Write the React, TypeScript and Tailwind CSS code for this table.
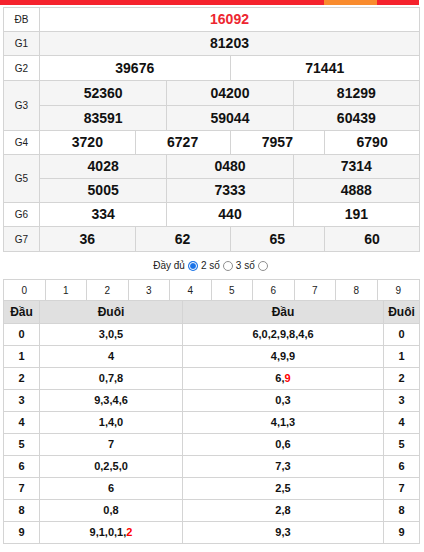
const prizes = [
  { label: "ĐB", h: "h-[24px]", cols: 1, lines: [["16092"]], red: true, gray: false },
  { label: "G1", h: "h-[24px]", cols: 1, lines: [["81203"]], gray: true },
  { label: "G2", h: "h-[25px]", cols: 2, lines: [["39676", "71441"]], gray: false },
  { label: "G3", h: "h-[50px]", cols: 3, lines: [["52360", "04200", "81299"], ["83591", "59044", "60439"]], gray: true },
  { label: "G4", h: "h-[24px]", cols: 4, lines: [["3720", "6727", "7957", "6790"]], gray: false },
  { label: "G5", h: "h-[48px]", cols: 3, lines: [["4028", "0480", "7314"], ["5005", "7333", "4888"]], gray: true },
  { label: "G6", h: "h-[24px]", cols: 3, lines: [["334", "440", "191"]], gray: false },
  { label: "G7", h: "h-[25px]", cols: 4, lines: [["36", "62", "65", "60"]], gray: true },
]

const gridCols: Record<number, string> = {
  1: "grid-cols-1",
  2: "grid-cols-2",
  3: "grid-cols-3",
  4: "grid-cols-4",
}

// [đầu, đuôi list, đầu list, đuôi] ; red index marks the highlighted digit
const loto = [
  { n: "0", duoi: "3,0,5", dau: "6,0,2,9,8,4,6" },
  { n: "1", duoi: "4", dau: "4,9,9" },
  { n: "2", duoi: "0,7,8", dau: "6,", dauRed: "9" },
  { n: "3", duoi: "9,3,4,6", dau: "0,3" },
  { n: "4", duoi: "1,4,0", dau: "4,1,3" },
  { n: "5", duoi: "7", dau: "0,6" },
  { n: "6", duoi: "0,2,5,0", dau: "7,3" },
  { n: "7", duoi: "6", dau: "2,5" },
  { n: "8", duoi: "0,8", dau: "2,8" },
  { n: "9", duoi: "9,1,0,1,", duoiRed: "2", dau: "9,3" },
]

function Radio({ checked }: { checked?: boolean }) {
  return checked ? (
    <span className="inline-flex w-[10px] h-[10px] rounded-full bg-[#1a73e8] items-center justify-center mx-[3px]">
      <span className="w-[6px] h-[6px] rounded-full bg-[#1a73e8] border border-white box-content" />
    </span>
  ) : (
    <span className="inline-block w-[10px] h-[10px] rounded-full border border-[#8f8f8f] bg-white mx-[3px]" />
  )
}

export default function App() {
  return (
    <div className="w-[424px] h-[552px] bg-white text-black" style={{ fontFamily: '"Liberation Sans", Arial, sans-serif' }}>
      {/* top bar */}
      <div className="flex h-[5px] w-[419px]">
        <div className="w-[324px] bg-[#f5222d]" />
        <div className="w-[53px] bg-[#f98b2e]" />
        <div className="flex-1 bg-[#f5222d]" />
      </div>

      {/* kết quả */}
      <div className="mt-[2px] ml-[3px] w-[417px] border-x border-b border-[#d4d4d4]">
        {prizes.map((p) => (
          <div key={p.label} className={`flex border-t border-[#d4d4d4] ${p.h} ${p.gray ? "bg-[#f5f5f5]" : "bg-white"}`}>
            <div className="w-[36px] shrink-0 border-r border-[#d4d4d4] flex items-center justify-center text-[10px] text-[#222]">
              {p.label}
            </div>
            <div className={`flex-1 grid ${gridCols[p.cols]}`}>
              {p.lines.map((line, li) =>
                line.map((num, ci) => (
                  <div
                    key={`${li}-${ci}`}
                    className={`flex items-center justify-center font-bold text-[14px] ${ci > 0 ? "border-l border-[#d4d4d4]" : ""} ${li > 0 ? "border-t border-[#d4d4d4]" : ""} ${p.red ? "text-[#ed2630]" : "text-[#111]"}`}
                  >
                    {num}
                  </div>
                ))
              )}
            </div>
          </div>
        ))}
      </div>

      <div className="h-[27px] flex items-center justify-center text-[10px] text-[#222]">
        <span>Đầy đủ</span>
        <Radio checked />
        <span>2 số</span>
        <Radio />
        <span>3 số</span>
        <Radio />
      </div>

      {/* loto */}
      <div className="ml-[3px] w-[417px] border border-[#d4d4d4]">
        <div className="grid grid-cols-10 h-[20px] text-[10px] text-[#222]">
          {Array.from({ length: 10 }, (_, i) => (
            <div key={i} className={`flex items-center justify-center ${i < 9 ? "border-r border-[#d4d4d4]" : ""}`}>
              {i}
            </div>
          ))}
        </div>
        <div className="grid grid-cols-[36px_143px_201px_1fr] h-[23px] border-t border-[#d4d4d4] bg-[#e0e0e0] font-bold text-[12px] text-[#111]">
          <div className="flex items-center justify-center border-r border-[#d4d4d4]">Đầu</div>
          <div className="flex items-center justify-center border-r border-[#d4d4d4]">Đuôi</div>
          <div className="flex items-center justify-center border-r border-[#d4d4d4]">Đầu</div>
          <div className="flex items-center justify-center">Đuôi</div>
        </div>
        {loto.map((r) => (
          <div key={r.n} className="grid grid-cols-[36px_143px_201px_1fr] h-[22px] border-t border-[#d4d4d4] font-bold text-[11px] text-[#111]">
            <div className="flex items-center justify-center border-r border-[#d4d4d4]">{r.n}</div>
            <div className="flex items-center justify-center border-r border-[#d4d4d4]">
              {r.duoi}
              {r.duoiRed && <span className="text-[#ff0000]">{r.duoiRed}</span>}
            </div>
            <div className="flex items-center justify-center border-r border-[#d4d4d4]">
              {r.dau}
              {r.dauRed && <span className="text-[#ff0000]">{r.dauRed}</span>}
            </div>
            <div className="flex items-center justify-center">{r.n}</div>
          </div>
        ))}
      </div>
    </div>
  )
}
